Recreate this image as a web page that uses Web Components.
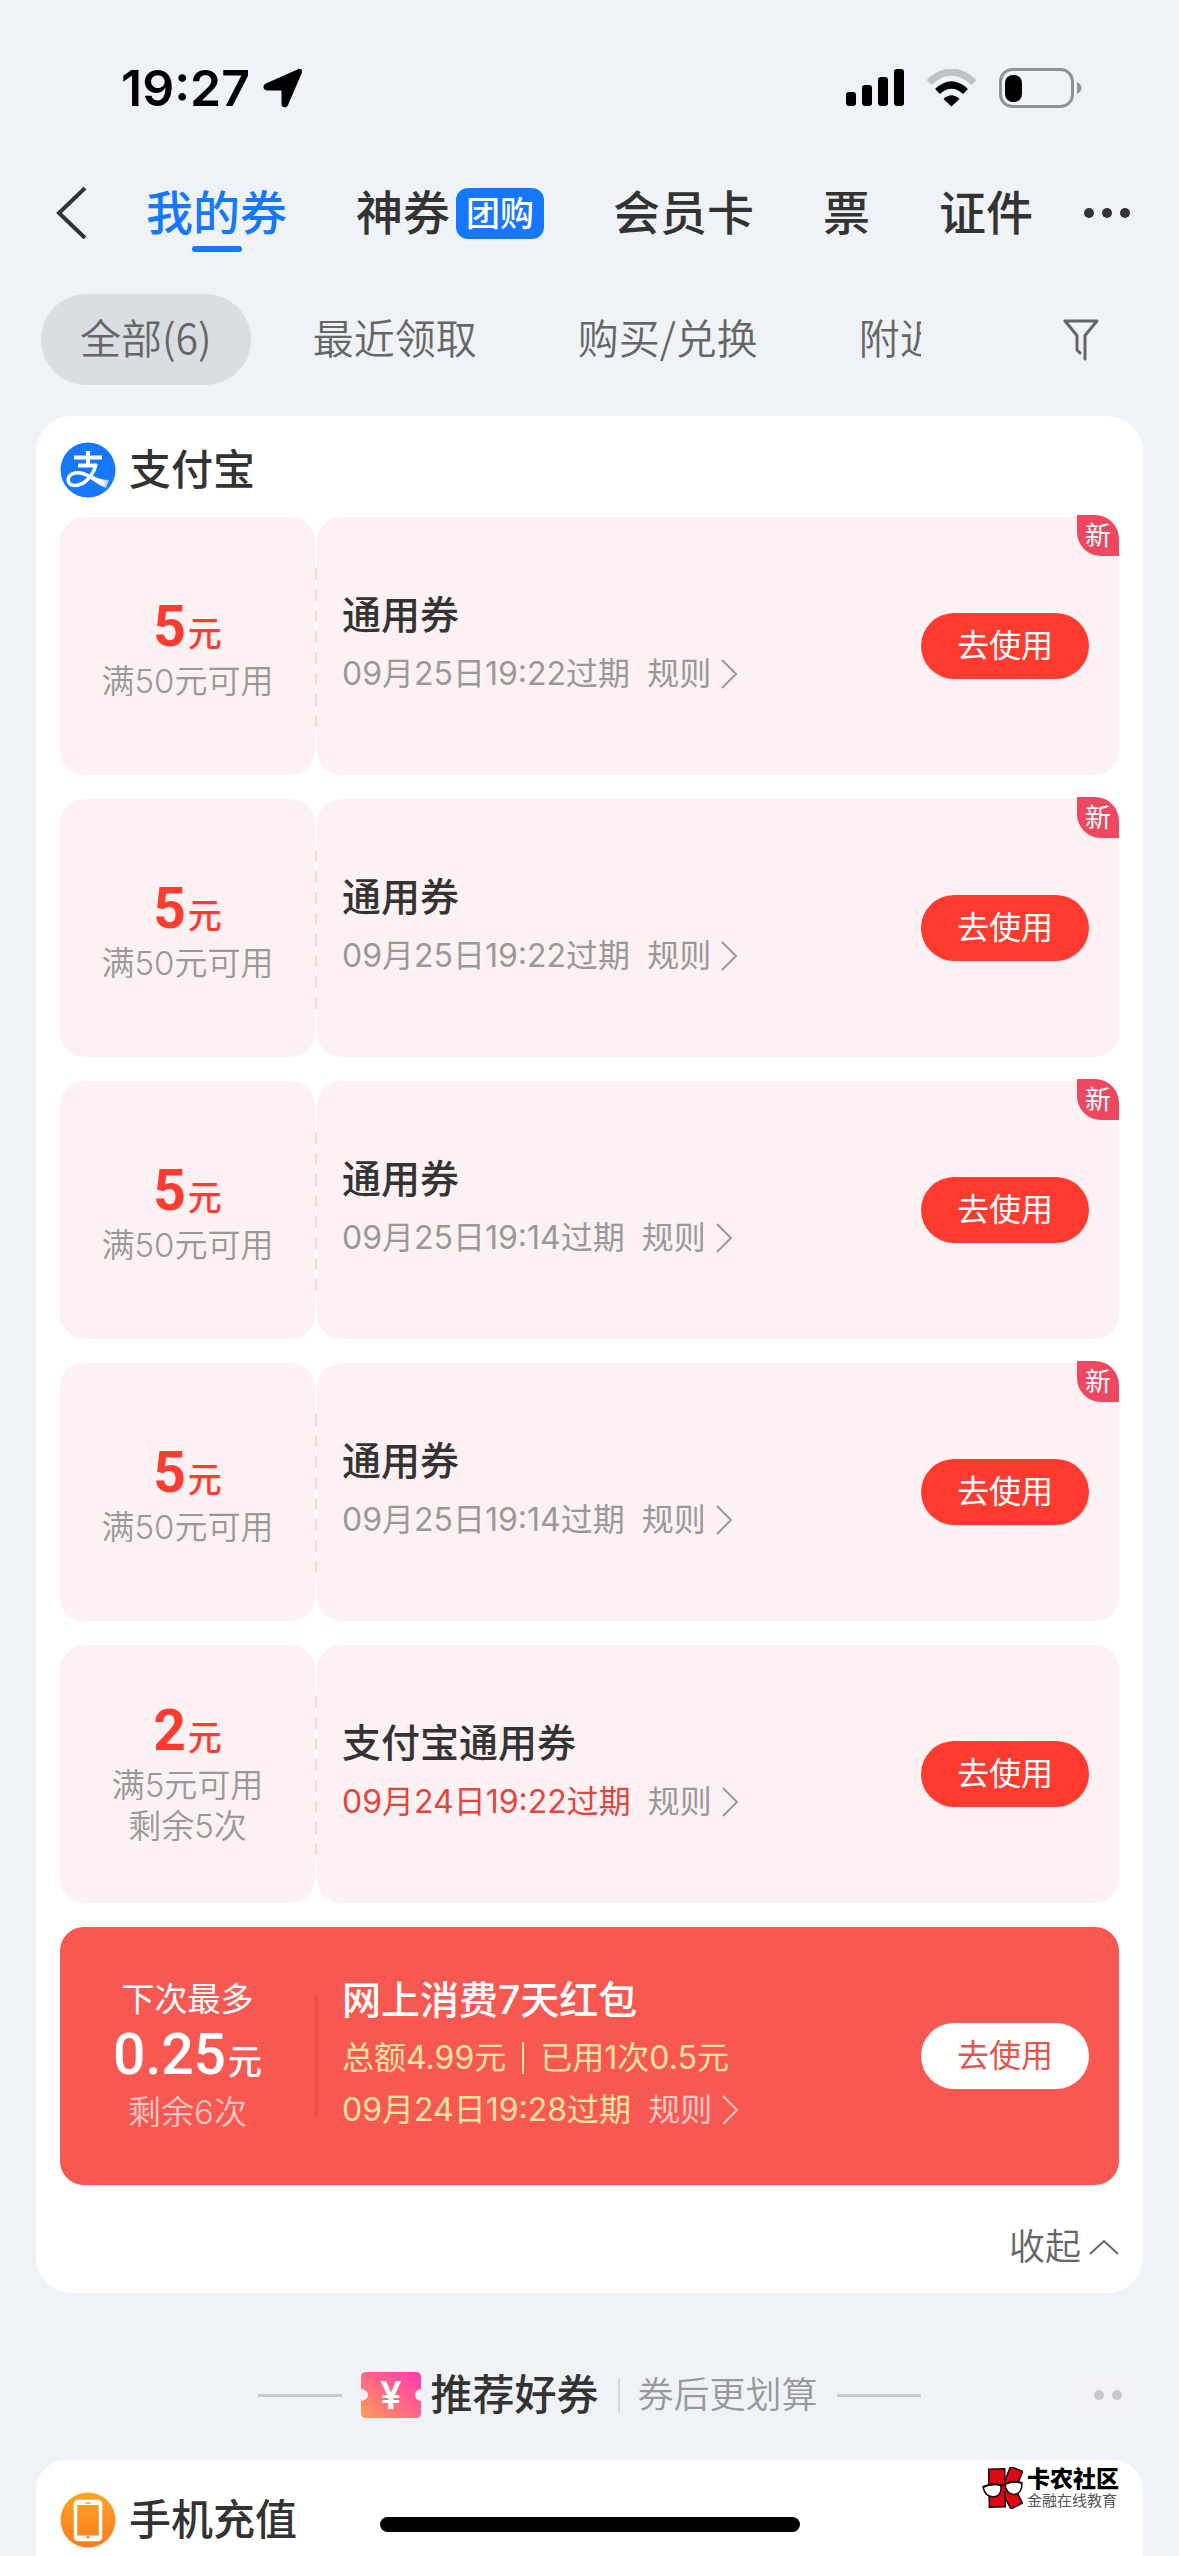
<!DOCTYPE html>
<html lang="zh-CN">
<head>
<meta charset="utf-8">
<meta name="viewport" content="width=device-width, initial-scale=1">
<title>我的券</title>
<style>
  html, body{ margin: 0; padding: 0; }
  body{
    background: #eff3f8;
    color: #333;
    font-family: Inter, "Noto Sans CJK SC", sans-serif;
    overflow: hidden;
  }
</style>
</head>
<body>

<coupon-app>
  <status-bar time="19:27"></status-bar>
  <nav-tabs></nav-tabs>
  <filter-chips></filter-chips>

  <coupon-group name="支付宝">
    <coupon-item amount="5" limit="满50元可用" title="通用券" expire="09月25日19:22过期" fresh></coupon-item>
    <coupon-item amount="5" limit="满50元可用" title="通用券" expire="09月25日19:22过期" fresh></coupon-item>
    <coupon-item amount="5" limit="满50元可用" title="通用券" expire="09月25日19:14过期" fresh></coupon-item>
    <coupon-item amount="5" limit="满50元可用" title="通用券" expire="09月25日19:14过期" fresh></coupon-item>
    <coupon-item amount="2" limit="满5元可用" remain="剩余5次" title="支付宝通用券" expire="09月24日19:22过期" urgent></coupon-item>
    <red-packet amount="0.25" top="下次最多" remain="剩余6次" title="网上消费7天红包" expire="09月24日19:28过期">
      <span slot="total">总额4.99元</span>
      <span slot="used">已用1次0.5元</span>
    </red-packet>
  </coupon-group>

  <recommend-title>
    推荐好券
    <span slot="sub">券后更划算</span>
  </recommend-title>

  <service-card>手机充值</service-card>
  <home-indicator></home-indicator>
</coupon-app>

<script>
// Crea la plantilla y la clona en un shadow root abierto
function mount(el, html){
  const tpl = document.createElement('template');
  tpl.innerHTML = html;
  el.attachShadow({mode:'open'}).appendChild(tpl.content.cloneNode(true));
}

// Estilos base de botones y enlaces
const RESET = `
  *{ box-sizing: border-box; }
  button{
    font: inherit; color: inherit; background: none;
    border: none; padding: 0; margin: 0; cursor: pointer;
  }
  a{ color: inherit; text-decoration: none; }
  svg{ display: block; flex: none; }
`;

class CouponApp extends HTMLElement {
  constructor(){
    super();
    mount(this, `
      <style>
        :host{
          position: relative;
          display: flex;
          flex-direction: column;
          height: 100vh;
          overflow: hidden;
        }
      </style>
      <slot></slot>
    `);
  }
}

/* Barra de estado */
class StatusBar extends HTMLElement {
  constructor(){
    super();
    mount(this, `
      <style>
        ${RESET}
        :host{
          display: flex;
          justify-content: space-between;
          align-items: center;
          flex: none;
          padding: 58px 97px 0 121px;
          color: #000;
        }
        .side{ display: flex; align-items: center; gap: 22px; }
        .left{ gap: 13px; }
        time{ font-size: 50px; line-height: 60px; font-weight: 600; }
      </style>
      <div class="side left">
        <time></time>
        <svg width="40" height="40" viewBox="0 0 40 40"><path d="M35 1.2C37.500 0 40 2.200 38.800 5L25 37C23.500 40.600 18.500 39.800 18.500 36V22.500H4C-.2 22.500-.8 17.200 2.800 15.500Z"/></svg>
      </div>
      <div class="side">
        <svg width="58" height="38" viewBox="0 0 58 38">
          <rect x="0" y="23" width="10" height="14" rx="3"/><rect x="16" y="16" width="10" height="21" rx="3"/>
          <rect x="32" y="8" width="10" height="29" rx="3"/><rect x="48" y="0" width="10" height="37" rx="3"/>
        </svg>
        <svg width="51" height="38" viewBox="0 0 51 38" fill="none">
          <path d="M3 13.500Q25.500-7.500 48 13.500" stroke="#c0c2c6" stroke-width="7"/>
          <path d="M11.500 22.500Q25.500 9.500 39.500 22.500" stroke="#000" stroke-width="7"/>
          <path d="M17.500 30Q25.500 22.500 33.500 30L25.500 37.500Z" fill="#000"/>
        </svg>
        <svg width="83" height="40" viewBox="0 0 83 40">
          <rect x="1.500" y="1.500" width="72" height="37" rx="12" fill="none" stroke="#909296" stroke-width="3"/>
          <rect x="6" y="7" width="17" height="27" rx="8"/>
          <path d="M78 14Q82.500 16.500 82.500 20T78 26Z" fill="#909296"/>
        </svg>
      </div>
    `);
  }
  connectedCallback(){
    this.shadowRoot.querySelector('time').textContent = this.getAttribute('time');
  }
}

/* Pestañas superiores */
class NavTabs extends HTMLElement {
  constructor(){
    super();
    mount(this, `
      <style>
        ${RESET}
        :host{
          display: flex;
          align-items: flex-start;
          flex: none;
          padding: 62px 48px 0 56px;
        }
        nav{ display: flex; gap: 69px; margin-left: 59px; }
        a{
          display: flex;
          flex-direction: column;
          align-items: center;
          font-size: 47px;
          line-height: 66px;
          font-weight: 500;
          white-space: nowrap;
        }
        a span{ display: flex; align-items: center; gap: 6px; }
        a.on{ color: #1677ff; }
        a.on::after{
          content: '';
          width: 50px;
          height: 6px;
          border-radius: 3px;
          background: #1677ff;
        }
        b{
          padding: 0 10px;
          border-radius: 12px;
          background: #1677ff;
          color: #fff;
          font-size: 34px;
          line-height: 51px;
          font-weight: 500;
        }
        button{ display: flex; align-items: center; height: 66px; }
        .more{ margin-left: auto; }
      </style>
      <button type="button" aria-label="返回">
        <svg width="31" height="52" viewBox="0 0 31 52" fill="none" stroke="#333" stroke-width="4"><path d="M29 1L3 26L29 51"/></svg>
      </button>
      <nav>
        <a class="on" href="#coupons">我的券</a>
        <a href="#deals"><span>神券<b>团购</b></span></a>
        <a href="#cards">会员卡</a>
        <a href="#tickets">票</a>
        <a href="#ids">证件</a>
      </nav>
      <button type="button" class="more" aria-label="更多">
        <svg width="48" height="12" viewBox="0 0 48 12" fill="#333"><circle cx="6" cy="6" r="5"/><circle cx="24" cy="6" r="5"/><circle cx="42" cy="6" r="5"/></svg>
      </button>
    `);
  }
}

/* Filtros */
class FilterChips extends HTMLElement {
  constructor(){
    super();
    mount(this, `
      <style>
        ${RESET}
        :host{
          display: flex;
          align-items: center;
          flex: none;
          gap: 142px;
          padding: 42px 80px 31px 41px;
          color: #666;
          font-family: "Noto Sans CJK SC", sans-serif;
          font-weight: 350;
        }
        .list{
          display: flex;
          flex: 1;
          min-width: 0;
          gap: 23px;
          overflow: hidden;
        }
        .list button{
          flex: none;
          padding: 0 39px 6px;
          border-radius: 46px;
          font-size: 41px;
          line-height: 85px;
          white-space: nowrap;
        }
        .list .on{ background: #dadde2; }
      </style>
      <div class="list">
        <button type="button" class="on">全部(6)</button>
        <button type="button">最近领取</button>
        <button type="button">购买/兑换</button>
        <button type="button">附近</button>
      </div>
      <button type="button" aria-label="筛选">
        <svg width="36" height="42" viewBox="0 0 36 42" fill="none" stroke="#666" stroke-width="3" stroke-linecap="round" stroke-linejoin="round"><path d="M17 34L14 31V16.500L2 2H34L22 16.500V40"/></svg>
      </button>
    `);
  }
}

/* Tarjeta blanca con la lista de cupones */
class CouponGroup extends HTMLElement {
  constructor(){
    super();
    mount(this, `
      <style>
        ${RESET}
        :host{
          display: block;
          flex: none;
          margin: 0 36px;
          padding: 0 24px 8px;
          border-radius: 36px;
          background: #fff;
        }
        header{
          display: flex;
          align-items: center;
          gap: 13px;
          height: 101px;
          padding-top: 7px;
        }
        h2{ margin: 0; font-size: 42px; line-height: 60px; font-weight: 500; }
        .list{ display: flex; flex-direction: column; gap: 24px; }
        footer{ display: flex; justify-content: flex-end; padding-top: 24px; }
        footer button{
          display: flex;
          align-items: center;
          gap: 8px;
          font-size: 36px;
          line-height: 76px;
          font-weight: 350;
          color: #666;
        }
      </style>
      <header>
        <svg width="56" height="56" viewBox="0 0 56 56">
          <defs><linearGradient id="tail"><stop offset=".6" stop-color="#fff"/><stop offset="1" stop-color="#fff" stop-opacity=".55"/></linearGradient></defs>
          <circle cx="28" cy="28" r="27.500" fill="#1677ff"/>
          <g fill="none" stroke="#fff" stroke-width="4">
            <path d="M14 15.500H42M28 9V24M18 23.500H37"/>
            <path d="M36 22C34 32 25 43.500 15 43.500C6 43.500 5.500 33 15 31C22 29.500 28 33.500 34 36.500" stroke-width="3.500"/>
          </g>
          <path d="M31 33Q40 38 49 38L46 46Q37 42 29 36Z" fill="url(#tail)"/>
        </svg>
        <h2></h2>
      </header>
      <div class="list"><slot></slot></div>
      <footer>
        <button type="button">收起<svg width="30" height="18" viewBox="0 0 30 18" fill="none" stroke="#666" stroke-width="2"><path d="M1 16L15 3L29 16"/></svg></button>
      </footer>
    `);
  }
  connectedCallback(){
    this.shadowRoot.querySelector('h2').textContent = this.getAttribute('name');
  }
}

// Estilos comunes del cupón normal y del sobre rojo
const TICKET = `
  ${RESET}
  :host{ display: flex; position: relative; height: 258px; }
  .left, .right{ display: flex; border-radius: 24px; }
  .left{
    flex: none;
    flex-direction: column;
    justify-content: center;
    align-items: center;
    width: 255px;
    font-size: 33px;
    line-height: 41px;
    font-weight: 350;
    white-space: nowrap;
  }
  .right{
    flex: 1;
    align-items: center;
    justify-content: space-between;
    padding: 0 30px 0 25px;
  }
  .amount{ height: 71px; padding-top: 8px; line-height: 61px; font-size: 34px; font-weight: 500; }
  .amount b{ font: 700 57px/1 Roboto, sans-serif; margin-right: 2px; }
  .info{ display: flex; flex-direction: column; gap: 8px; white-space: nowrap; }
  h3{ margin: 0; font-size: 39px; line-height: 48px; font-weight: 500; }
  .row{ display: flex; align-items: center; font-size: 32px; line-height: 54px; font-weight: 400; }
  .row a{ display: flex; align-items: center; gap: 9px; margin-left: 17px; }
  .use{
    width: 168px;
    border-radius: 33px;
    font-size: 32px;
    line-height: 66px;
    text-align: center;
    background: #ff3b2f;
    color: #fff;
  }
`;

const ARROW = `<svg width="18" height="30" viewBox="0 0 18 30" fill="none" stroke="currentColor" stroke-width="2"><path d="M2 1L16 15L2 29"/></svg>`;

class CouponItem extends HTMLElement {
  constructor(){
    super();
    mount(this, `
      <style>
        ${TICKET}
        :host{ gap: 2px; }
        .left, .right{ background: #fef1f3; }
        .left, .row{ color: #999; }
        .amount{ color: #fa3d32; }
        .remain{ margin-bottom: 8px; }
        .remain:empty{ display: none; }
        :host([urgent]) .expire{ color: #e2463e; }
        .dash{
          position: absolute;
          left: 255px;
          top: 51px;
          width: 2px;
          height: 159px;
          background: repeating-linear-gradient(#fad3d9 0 12px, transparent 12px 21px);
        }
        .new{
          position: absolute;
          right: 0;
          top: -2px;
          width: 42px;
          border-radius: 0 24px 0 24px;
          background: #ed4860;
          color: #fff;
          font-size: 26px;
          line-height: 41px;
          text-align: center;
        }
      </style>
      <div class="left">
        <div class="amount"><b></b>元</div>
        <div class="limit"></div>
        <div class="remain"></div>
      </div>
      <div class="right">
        <div class="info">
          <h3></h3>
          <div class="row"><span class="expire"></span><a href="#rules">规则${ARROW}</a></div>
        </div>
        <button type="button" class="use">去使用</button>
      </div>
      <div class="dash"></div>
    `);
  }
  connectedCallback(){
    const $ = s => this.shadowRoot.querySelector(s);
    $('b').textContent = this.getAttribute('amount');
    $('.limit').textContent = this.getAttribute('limit');
    $('.remain').textContent = this.getAttribute('remain') || '';
    $('h3').textContent = this.getAttribute('title');
    $('.expire').textContent = this.getAttribute('expire');
    if (this.hasAttribute('fresh') && !$('.new')){
      const tag = document.createElement('span');
      tag.className = 'new';
      tag.textContent = '新';
      this.shadowRoot.appendChild(tag);
    }
  }
}

class RedPacket extends HTMLElement {
  constructor(){
    super();
    mount(this, `
      <style>
        ${TICKET}
        :host{ align-items: center; border-radius: 24px; background: #f75952; color: #fff; }
        .line{ flex: none; width: 3px; height: 120px; background: #ec4b47; }
        .top{ font-weight: 400; }
        .amount{ height: 64px; padding-top: 6px; line-height: 54px; }
        .amount b{ font-weight: 500; }
        .remain{ margin-top: 8px; color: #fcc6c4; }
        .row{ color: #fde3a0; line-height: 52px; }
        .row i{ width: 2px; height: 32px; margin: 0 16px; background: currentColor; }
        .row a{ color: #fcc6c4; }
        .right{ padding-left: 24px; }
        .use{ background: #fff; color: #e2564b; }
      </style>
      <div class="left">
        <div class="top"></div>
        <div class="amount"><b></b>元</div>
        <div class="remain"></div>
      </div>
      <div class="line"></div>
      <div class="right">
        <div class="info">
          <h3></h3>
          <div>
            <div class="row"><slot name="total"></slot><i></i><slot name="used"></slot></div>
            <div class="row"><span class="expire"></span><a href="#rules">规则${ARROW}</a></div>
          </div>
        </div>
        <button type="button" class="use">去使用</button>
      </div>
    `);
  }
  connectedCallback(){
    const $ = s => this.shadowRoot.querySelector(s);
    $('.top').textContent = this.getAttribute('top');
    $('b').textContent = this.getAttribute('amount');
    $('.remain').textContent = this.getAttribute('remain');
    $('h3').textContent = this.getAttribute('title');
    $('.expire').textContent = this.getAttribute('expire');
  }
}

/* Título de recomendados */
class RecommendTitle extends HTMLElement {
  constructor(){
    super();
    mount(this, `
      <style>
        ${RESET}
        :host{
          display: grid;
          grid-template-columns: 1fr auto 1fr;
          align-items: center;
          flex: none;
          padding: 71px 36px 34px;
        }
        .mid{ grid-column: 2; display: flex; align-items: center; gap: 19px; white-space: nowrap; }
        .rule{ width: 84px; height: 3px; background: #cacbcd; }
        h2{
          display: flex;
          align-items: center;
          gap: 9px;
          margin: 0;
          font-size: 42px;
          line-height: 62px;
          font-weight: 500;
        }
        .sub{
          display: flex;
          align-items: center;
          gap: 18px;
          font-size: 36px;
          line-height: 62px;
          font-weight: 350;
          color: #999;
        }
        .sub i{ width: 2px; height: 35px; background: #d6d8dc; }
        text{ font: 600 38px Inter, sans-serif; }
        button{
          justify-self: end;
          display: grid;
          place-items: center;
          width: 70px;
          height: 50px;
          border-radius: 12px;
          background: #f2f3f6;
        }
      </style>
      <div class="mid">
        <div class="rule"></div>
        <h2>
          <svg width="60" height="46" viewBox="0 0 60 46">
            <defs><linearGradient id="g" x1="0" y1="1" x2="1" y2="0"><stop stop-color="#ff9d55"/><stop offset=".5" stop-color="#ff6786"/><stop offset="1" stop-color="#ff3bb0"/></linearGradient></defs>
            <path fill="url(#g)" d="M5 0H55Q60 0 60 5V17Q54 18 54 23T60 29V41Q60 46 55 46H5Q0 46 0 41V29Q7 28 7 23T0 17V5Q0 0 5 0Z"/>
            <text x="30" y="37" text-anchor="middle" fill="#fff">¥</text>
          </svg>
          <span><slot></slot></span>
        </h2>
        <div class="sub"><i></i><slot name="sub"></slot></div>
        <div class="rule"></div>
      </div>
      <button type="button" aria-label="更多">
        <svg width="28" height="10" viewBox="0 0 28 10" fill="#c8cacf"><circle cx="5" cy="5" r="5"/><circle cx="23" cy="5" r="5"/></svg>
      </button>
    `);
  }
}

/* Tarjeta inferior con la marca de la comunidad */
class ServiceCard extends HTMLElement {
  constructor(){
    super();
    mount(this, `
      <style>
        ${RESET}
        :host{
          display: flex;
          justify-content: space-between;
          align-items: flex-start;
          flex: 1;
          margin: 0 36px;
          padding: 0 24px;
          border-radius: 30px 30px 0 0;
          background: #fff;
        }
        .name{
          display: flex;
          align-items: center;
          gap: 13px;
          padding-top: 30px;
          font-size: 42px;
          line-height: 60px;
          font-weight: 500;
        }
        .brand{ display: flex; align-items: center; gap: 4px; padding-top: 6px; }
        .brand b{ display: block; font-size: 23px; line-height: 26px; font-weight: 900; color: #000; }
        .brand small{ display: block; font-size: 15px; line-height: 18px; color: #555; }
      </style>
      <div class="name">
        <svg width="56" height="56" viewBox="0 0 56 56">
          <defs><linearGradient id="o" x2="0" y2="1"><stop stop-color="#fba628"/><stop offset="1" stop-color="#fd7a1e"/></linearGradient></defs>
          <circle cx="28" cy="28" r="27.500" fill="url(#o)"/>
          <rect x="15.500" y="9.500" width="25" height="38" rx="2.500" fill="none" stroke="#fff" stroke-width="3.500"/>
          <path d="M16 43.500H40V47H16ZM16 10H40V13H16Z" fill="#fff"/>
          <circle cx="28" cy="45" r="1.600" fill="#fd7f1e"/><path d="M25.500 11H30.500" stroke="#fba628" stroke-width="1.500"/>
        </svg>
        <span><slot></slot></span>
      </div>
      <div class="brand">
        <svg width="41" height="42" viewBox="0 0 41 42" stroke="#1b0506" stroke-width="1.500">
          <g fill="#dc0813">
            <rect x="24" y="1" width="13" height="22" transform="rotate(22 30 12)"/>
            <rect x="23" y="18" width="13" height="22" transform="rotate(-28 30 29)"/>
            <rect x="7" y="2" width="16" height="38" transform="rotate(-1 14 20)"/>
          </g>
          <path d="M22 15L27 14V25L22 24Z" fill="#dc0813" stroke="none"/>
          <path d="M18 19L24 17" stroke-width="2"/>
          <path d="M1 20Q9 16 19 18Q20 29 12 30Q3 30 1 20Z" fill="#fff"/>
          <path d="M23 17Q32 13 40 16Q40 27 32 27.500Q24 27 23 17Z" fill="#fff"/>
          <path d="M1 20Q9 16 19 18M23 17Q32 13 40 16" fill="none" stroke-width="2"/>
        </svg>
        <div><b>卡农社区</b><small>金融在线教育</small></div>
      </div>
    `);
  }
}

class HomeIndicator extends HTMLElement {
  constructor(){
    super();
    mount(this, `
      <style>
        :host{
          position: absolute;
          left: 0; right: 0; bottom: 24px;
          display: flex;
          justify-content: center;
        }
        div{ width: 420px; height: 15px; border-radius: 8px; background: #000; }
      </style>
      <div></div>
    `);
  }
}

customElements.define('coupon-app', CouponApp);
customElements.define('status-bar', StatusBar);
customElements.define('nav-tabs', NavTabs);
customElements.define('filter-chips', FilterChips);
customElements.define('coupon-group', CouponGroup);
customElements.define('coupon-item', CouponItem);
customElements.define('red-packet', RedPacket);
customElements.define('recommend-title', RecommendTitle);
customElements.define('service-card', ServiceCard);
customElements.define('home-indicator', HomeIndicator);
</script>
</body>
</html>
